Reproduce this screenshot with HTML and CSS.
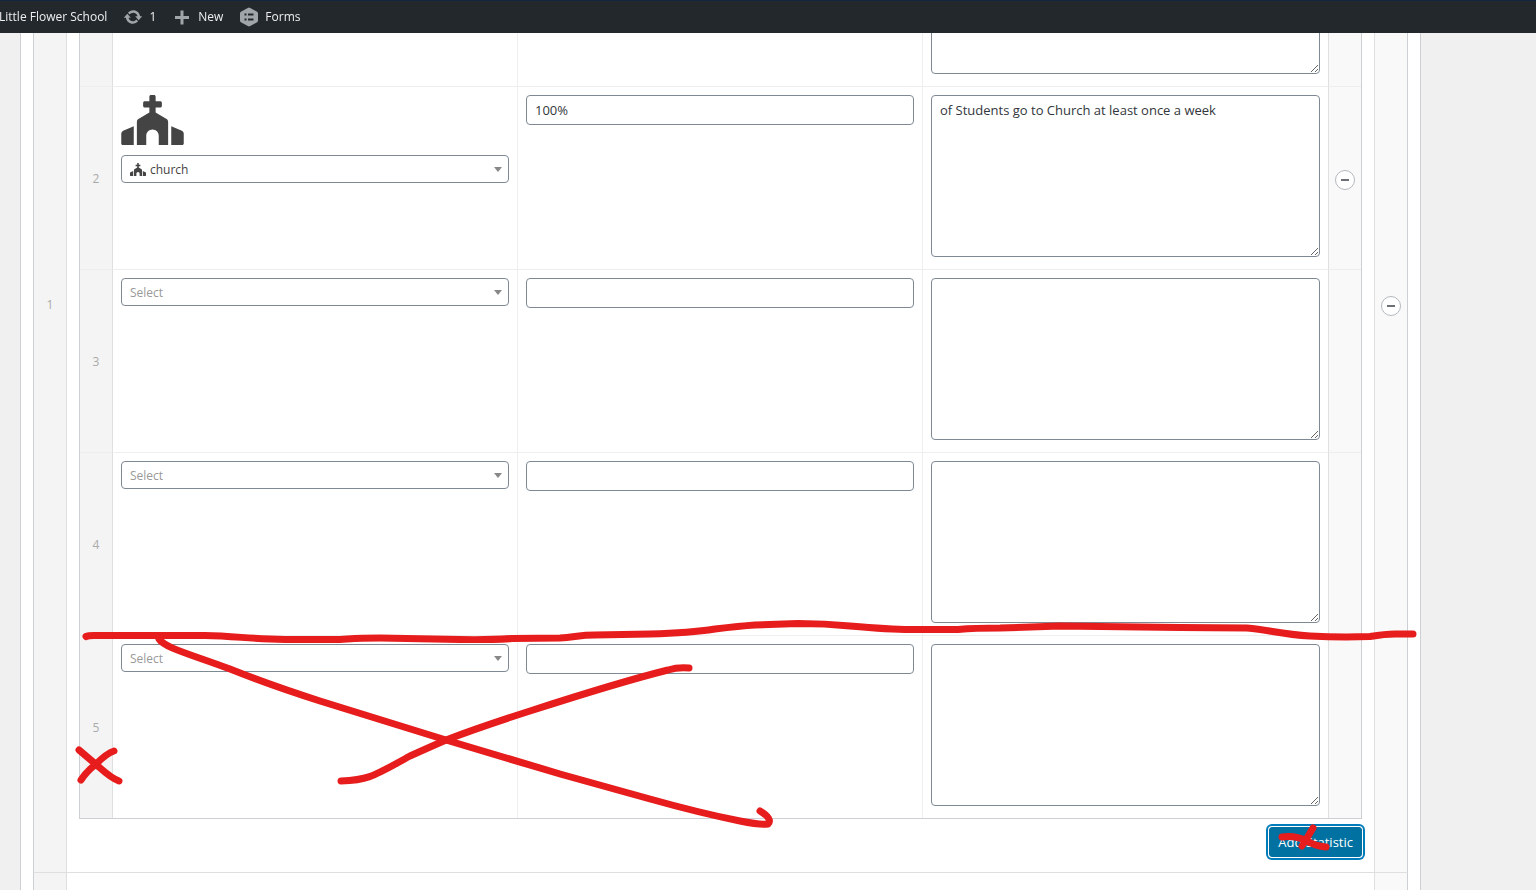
FILE: index.html
```html
<!DOCTYPE html>
<html lang="en">
<head>
  <meta charset="UTF-8">
  <meta name="viewport" content="width=device-width, initial-scale=1.0">
  <title>Edit Page - Little Flower School</title>
  <link rel="stylesheet" href="styles.css">
</head>
<body>
  <nav class="adminbar">
    <a class="site-name" href="#">Little Flower School</a>
    <a href="#" class="updates">
      <svg width="20" height="20" viewBox="0 0 20 20"><path d="M10.2 3.28c3.53 0 6.43 2.61 6.92 6h2.08l-3.5 4-3.5-4h2.32c-.45-1.97-2.21-3.45-4.32-3.45-1.45 0-2.73.71-3.54 1.78L4.95 5.66C6.23 4.2 8.11 3.28 10.2 3.28zm-.4 13.44c-3.52 0-6.43-2.61-6.92-6H.8l3.5-4c1.17 1.33 2.33 2.67 3.5 4H5.48c.45 1.97 2.21 3.45 4.32 3.45 1.45 0 2.73-.71 3.54-1.78l1.71 1.95c-1.28 1.46-3.15 2.38-5.25 2.38z"/></svg>
      <span>1</span>
    </a>
    <a href="#" class="new">
      <svg width="20" height="20" viewBox="0 0 20 20"><path d="M8.5 3.5h3v5.5h5.500v3h-5.500v5.500h-3V12H3V9h5.500z"/></svg>
      <span>New</span>
    </a>
    <a href="#" class="forms">
      <svg width="20" height="20" viewBox="0 0 20 20"><path fill-rule="evenodd" d="M10 .5q.6 0 1.200.4l6.500 3.500q1.300.7 1.300 1.800v7.600q0 1.100-1.300 1.800l-6.500 3.500q-1.200.7-2.400 0l-6.500-3.500Q1 14.900 1 13.800V6.200q0-1.100 1.300-1.800L8.800.9Q9.400.5 10 .5zM5.500 6.500v2h2v-2zm3.500 0v2h5.500v-2zM5.500 11.500v2h2v-2zm3.500 0v2h5.500v-2z"/></svg>
      <span>Forms</span>
    </a>
  </nav>

  <main class="panel">
    <section class="group">
      <div class="handle order">1</div>
      <div class="content">
        <div class="earlier"></div>
        <table class="repeater">
          <colgroup><col class="narrow"><col><col><col><col class="narrow"></colgroup>
          <tbody>
            <tr>
              <td class="order"></td>
              <td></td>
              <td></td>
              <td><textarea aria-label="Description 1"></textarea></td>
              <td class="remove"></td>
            </tr>
            <tr>
              <td class="order">2</td>
              <td>
                <svg class="preview" viewBox="0 0 640 512"><path id="church" d="M464.420 246.680L352 179.200V128h48c8.840 0 16-7.160 16-16V80c0-8.840-7.160-16-16-16h-48V16c0-8.840-7.160-16-16-16h-32c-8.840 0-16 7.160-16 16v48h-48c-8.840 0-16 7.160-16 16v32c0 8.840 7.160 16 16 16h48v51.200l-112.420 67.480A32 32 0 0 0 160 274.120V512h96v-96c0-35.350 28.650-64 64-64s64 28.650 64 64v96h96V274.120c0-11.240-5.900-21.660-15.580-27.440zM0 395.960V496c0 8.840 7.160 16 16 16h112V320L19.390 366.540A32 32 0 0 0 0 395.960zm620.610-29.420L512 320v192h112c8.840 0 16-7.160 16-16V395.960c0-12.800-7.630-24.370-19.390-29.420z"/></svg>
                <div class="picker has-icon">
                  <svg class="picked" viewBox="0 0 640 512"><use href="#church"/></svg>
                  <select aria-label="Icon 2"><option>church</option></select>
                </div>
              </td>
              <td><input type="text" aria-label="Statistic 2" value="100%"></td>
              <td><textarea aria-label="Description 2">of Students go to Church at least once a week</textarea></td>
              <td class="remove"><button class="minus" aria-label="Remove row"></button></td>
            </tr>
            <tr>
              <td class="order">3</td>
              <td><div class="picker"><select aria-label="Icon 3"><option>Select</option></select></div></td>
              <td><input type="text" aria-label="Statistic 3"></td>
              <td><textarea aria-label="Description 3"></textarea></td>
              <td class="remove"></td>
            </tr>
            <tr>
              <td class="order">4</td>
              <td><div class="picker"><select aria-label="Icon 4"><option>Select</option></select></div></td>
              <td><input type="text" aria-label="Statistic 4"></td>
              <td><textarea aria-label="Description 4"></textarea></td>
              <td class="remove"></td>
            </tr>
            <tr>
              <td class="order">5</td>
              <td><div class="picker"><select aria-label="Icon 5"><option>Select</option></select></div></td>
              <td><input type="text" aria-label="Statistic 5"></td>
              <td><textarea aria-label="Description 5"></textarea></td>
              <td class="remove"></td>
            </tr>
          </tbody>
        </table>
        <div class="actions"><button class="add">Add Statistic</button></div>
      </div>
      <div class="handle remove"><button class="minus" aria-label="Remove group"></button></div>
    </section>
    <section class="group next">
      <div class="handle order"></div>
      <div class="content"></div>
      <div class="handle remove"></div>
    </section>
  </main>

  <!-- red pen marks -->
  <svg class="marks" width="1536" height="890" viewBox="0 0 1536 890">
    <path d="M86 636.500Q88 635.500 94 635.500H205C235 636 250 639 285 639.500H340C350 639 355 638 380 638L460 639.500Q490 640 512 638.500L560 638C575 637 580 635 595 635L650 634Q690 633 715 629Q740 626 755 625L798 623.500Q825 623.500 850 626Q890 629.500 910 629.500H958Q975 628 1000 628L1060 626L1180 627.500L1247 628C1270 630 1280 634 1310 636Q1340 637.500 1370 636.500Q1385 634 1395 634H1413"/>
    <path d="M159 639C165 648 190 654 230 669Q270 685 320 701L446 740L560 774L650 799Q700 813 740 821Q760 825 768 824Q773 819 760 811"/>
    <path d="M341 781C370 780 375 775 410 756Q430 747 446 740Q480 727 530 711Q620 682 668 670Q678 667 689 668"/>
    <path d="M79 750L99 767Q111 778 119 781M114 751Q107 753 95 765Q87 771 81 780"/>
    <path d="M1282 837Q1295 835 1307 841Q1315 846 1326 847M1313 828L1307 838L1302 846"/>
  </svg>
</body>
</html>
```
FILE: styles.css
```css
* {
  box-sizing: border-box;
}

body {
  margin: 0;
  min-height: 100vh;
  overflow: hidden;
  background: #f0f0f1;
  color: #32373c;
  font-family: "Segoe UI", "Open Sans", "Noto Sans", sans-serif;
  font-size: 12px;
}

/* Toolbar */
.adminbar {
  position: fixed;
  top: 0;
  left: 0;
  right: 0;
  z-index: 10;
  height: 33px;
  display: flex;
  align-items: center;
  gap: 16px;
  background: #23282d;
  border-top: 1px solid #14253f;
}

.adminbar a {
  display: flex;
  align-items: center;
  gap: 6px;
  color: #eee;
  line-height: 32px;
  text-decoration: none;
  white-space: nowrap;
}

.adminbar .site-name {
  margin-left: -1px;
}

.adminbar svg {
  fill: #a0a5aa;
}

/* Panel, scrolled up underneath the toolbar */
.panel {
  margin: -264px 115px 0 20px;
  padding: 0 12px;
  background: #fff;
  border: solid #ccd0d4;
  border-width: 0 1px;
}

.group {
  display: grid;
  grid-template-columns: 33px minmax(0, 1fr) 33px;
  border: solid #ccd0d4;
  border-width: 0 1px;
}

.group.next {
  height: 60px;
  border-top: 1px solid #dfdfdf;
}

.handle {
  display: flex;
  align-items: center;
  justify-content: center;
}

.order {
  background: #f4f4f4;
  border-right: 1px solid #dfdfdf;
  color: #aaa;
}

.remove {
  background: #f9f9f9;
  border-left: 1px solid #dfdfdf;
}

.content {
  padding: 12px 12px 15px;
}

.next .content {
  padding: 0;
}

.earlier {
  height: 154px;
}

/* Repeater table */
.repeater {
  width: 100%;
  table-layout: fixed;
  border-collapse: separate;
  border-spacing: 0;
  border: 1px solid #ccd0d4;
}

.narrow {
  width: 33px;
}

.repeater td {
  height: 183px;
  padding: 8px 8px 12px;
  vertical-align: top;
  border-top: 1px solid #eee;
  border-right: 1px solid #eee;
}

.repeater td:nth-child(4),
.repeater td.remove {
  border-right: 0;
}

.repeater td.order,
.repeater td.remove {
  padding: 0;
  text-align: center;
  vertical-align: middle;
}

.repeater td.order {
  border-right-color: #dfdfdf;
}

input,
select,
textarea {
  display: block;
  width: 100%;
  margin: 0;
  border: 1px solid #7e8993;
  border-radius: 4px;
  background: #fff;
  color: #32373c;
  font-family: inherit;
}

input {
  height: 30px;
  padding: 0 8px;
  font-size: 13px;
}

textarea {
  height: 162px;
  padding: 4px 8px;
  font-size: 13px;
  line-height: 20px;
}

.preview {
  display: block;
  width: 63px;
  height: 50px;
  margin-bottom: 10px;
  fill: #444;
}

.picker {
  position: relative;
}

.picker::after {
  content: "";
  position: absolute;
  top: 12px;
  right: 7px;
  border: solid transparent;
  border-width: 5px 4px 0;
  border-top-color: #888;
}

.picker select {
  height: 28px;
  padding: 0 24px 0 8px;
  appearance: none;
  font-size: 12px;
  color: #999;
}

.picker.has-icon select {
  padding-left: 28px;
  color: #444;
}

.picked {
  position: absolute;
  top: 8px;
  left: 9px;
  width: 16px;
  height: 13px;
  fill: #444;
}

.minus {
  position: relative;
  display: inline-block;
  width: 20px;
  height: 20px;
  padding: 0;
  border: 1px solid #b4b9be;
  border-radius: 50%;
  background: #fff;
  vertical-align: middle;
}

.minus::before {
  content: "";
  position: absolute;
  top: 8px;
  left: 5px;
  width: 8px;
  height: 2px;
  background: #6c7075;
}

.remove .minus {
  margin-top: 4px;
}

.actions {
  display: flex;
  justify-content: flex-end;
  margin-top: 8px;
}

.add {
  height: 30px;
  padding: 0 8px;
  border: 1px solid #0071a1;
  border-radius: 3px;
  background: #0071a1;
  box-shadow: 0 0 0 1px #fff, 0 0 0 3px #007cba;
  color: #fff;
  font-family: inherit;
  font-size: 13px;
}

.marks {
  position: absolute;
  top: 0;
  left: 0;
  z-index: 20;
  pointer-events: none;
  fill: none;
  stroke: #e71d1d;
  stroke-width: 7;
  stroke-linecap: round;
  stroke-linejoin: round;
}
```
